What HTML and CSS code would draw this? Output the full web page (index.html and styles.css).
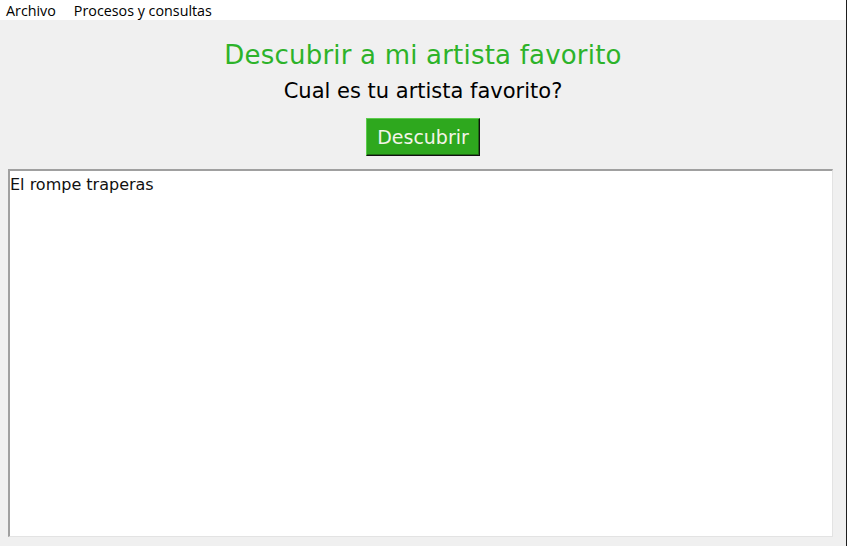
FILE: index.html
```html
<!DOCTYPE html>
<html lang="es">
<head>
<meta charset="utf-8">
<link rel="stylesheet" href="styles.css">
</head>
<body>
<div class="window">
  <nav class="menubar">
    <span class="menu-item">Archivo</span>
    <span class="menu-item">Procesos y consultas</span>
  </nav>
  <main class="content">
    <h1 class="title">Descubrir a mi artista favorito</h1>
    <p class="subtitle">Cual es tu artista favorito?</p>
    <button class="btn">Descubrir</button>
    <div class="output">El rompe traperas</div>
  </main>
</div>
</body>
</html>
```
FILE: styles.css
```css
html, body {
  margin: 0;
  padding: 0;
  height: 100%;
}
body {
  background: #f0f0f0;
}
.window {
  height: 546px;
  display: flex;
  flex-direction: column;
  border-right: 1px solid #1e1e1e;
  box-sizing: border-box;
}
.menubar {
  height: 20px;
  background: #ffffff;
  display: flex;
  align-items: center;
  padding-left: 6px;
  font-family: "Open Sans", "Noto Sans", sans-serif;
  font-size: 14.3px;
  color: #000;
}
.menu-item {
  margin-right: 18px;
}
.content {
  flex: 1;
  display: flex;
  flex-direction: column;
  align-items: center;
  font-family: "DejaVu Sans", Verdana, sans-serif;
}
.title {
  margin: 20px 0 0;
  font-weight: normal;
  font-size: 26px;
  line-height: 30px;
  letter-spacing: 0.2px;
  color: #2db32a;
}
.subtitle {
  margin: 8px 0 0;
  font-size: 21px;
  line-height: 26px;
  color: #000;
}
.btn {
  margin-top: 14px;
  width: 114px;
  height: 38px;
  background: #2ea81e;
  color: #f4f4e8;
  font-family: "DejaVu Sans", Verdana, sans-serif;
  font-size: 19px;
  border: 1px solid;
  border-color: #5ccc4c #111111 #111111 #5ccc4c;
  box-shadow: inset -1px -1px 0 #1f6a14;
  padding: 0;
}
.output {
  align-self: stretch;
  margin: 13px 13px 9px 8px;
  flex: 1;
  background: #ffffff;
  border-top: 2px solid #a0a0a0;
  border-left: 2px solid #a0a0a0;
  border-right: 1px solid #e3e3e3;
  border-bottom: 1px solid #e3e3e3;
  font-size: 16px;
  line-height: 19px;
  color: #111;
  padding: 4px 0;
}
```
